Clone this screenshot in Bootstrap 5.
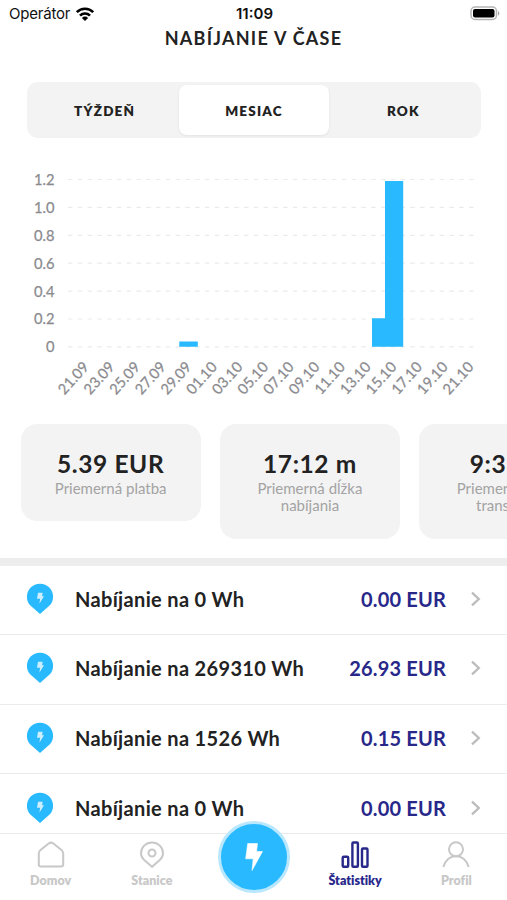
<!DOCTYPE html>
<html lang="sk">
<head>
<meta charset="utf-8">
<meta name="viewport" content="width=device-width, initial-scale=1">
<title>Nabíjanie v čase</title>
<link href="https://cdn.jsdelivr.net/npm/bootstrap@5.3.0/dist/css/bootstrap.min.css" rel="stylesheet">
<style>
  body { font-family: Lato, "Open Sans", sans-serif; color: #222; background: #fff; font-variant-ligatures: none; }
  .screen { width: 507px; height: 900px; }
  .statusbar { height: 27px; font: 15px/27px Inter, "Liberation Sans", sans-serif; color: #111; padding: 0 7px 0 9px; }
  .statusbar > div { flex: 1 1 0; }
  .statusbar .carrier { letter-spacing: -.2px; }
  .clock { font-weight: 600; }
  .page-title { font-size: 18px; line-height: 22px; letter-spacing: 1.25px; font-weight: 700; margin: 0 0 33px; }
  .segments { margin: 0 26px 0 27px; height: 56px; padding: 3px; background: #f3f3f3; border-radius: 11px; }
  .segments .btn { border: 0; font-size: 13.5px; font-weight: 800; letter-spacing: 1.2px; color: #222; border-radius: 8px; padding: 2px 0 0; }
  .segments .btn.active { background: #fff; color: #222; box-shadow: 0 1px 3px rgba(0,0,0,.07); }
  .chart { height: 272px; margin-top: 14px; }
  .chart text { font-family: Lato, sans-serif; font-size: 14.7px; fill: #8b8b8f; stroke: #8b8b8f; stroke-width: .25px; }
  .stats { padding-left: 20.5px; gap: 19px; height: 134px; }
  .stat-box { flex: 0 0 180.3px; background: #f3f3f3; border-radius: 16px; padding: 23px 20px 24px; }
  .stat-value { font-size: 24.5px; line-height: 33px; font-weight: 700; letter-spacing: .6px; }
  .stat-label { font-size: 15px; line-height: 17.3px; color: #a3a3a3; }
  .band { height: 7.500px; background: #ededed; }
  .charges .list-group-item { height: 69.5px; padding: 0 25px 2px 26px; border-color: #ececec; border-width: 0 0 1.5px; color: #222; font-size: 20px; font-weight: 700; letter-spacing: .34px; }
  .pin { margin-right: 21px; }
  .amount { color: #28288a; margin-right: 24px; letter-spacing: .17px; }
  .tabs { height: 67px; border-top: 1px solid #ebebeb; background: #fff; z-index: 2; }
  .tabs a { flex: 1 1 0; font-size: 12.5px; line-height: 15px; font-weight: 800; color: #c8c8c8; padding-top: 6px; }
  .tabs a.current { color: #28288a; }
  .tabs svg { display: block; margin: 0 auto 3px; }
  .charge-btn { width: 72px; height: 72px; margin: -13px 14.500px 0 15.500px; border: 3px solid #b9e7fd; border-radius: 50%; background: #28b9ff; }
  .tabs .charge-btn svg { margin: 0; }
</style>
<script src="https://cdn.jsdelivr.net/npm/bootstrap@5.3.0/dist/js/bootstrap.bundle.min.js"></script>
</head>
<body>
<svg width="0" height="0" class="position-absolute" aria-hidden="true">
  <symbol id="pin" viewBox="0 0 28 32"><path d="M14 .8C6.600 .8.900 6.700.900 13.800c0 3.600 1.200 6.400 3.500 8.800l9.600 8.500 9.600-8.500c2.300-2.400 3.500-5.200 3.500-8.800C27.100 6.700 21.400.8 14 .8z" fill="#28b9ff"/><path d="M12 9.800h4.600l-.5 3.500h1.900l-4.600 7.400.7-4.900h-3.100z" fill="#cdeeff"/></symbol>
  <symbol id="next" viewBox="0 0 12 18"><path d="M2 2.700 8.800 9 2 15.300" fill="none" stroke="#bcbcbc" stroke-width="2.300"/></symbol>
</svg>
<main class="screen d-flex flex-column overflow-hidden">
  <header class="statusbar d-flex flex-shrink-0">
    <div class="carrier d-flex align-items-center"><span>Operátor</span>
      <svg class="ms-1" width="22" height="16" viewBox="0 0 22 16"><g fill="none" stroke="#000" stroke-width="2.600"><path d="M2.800 6.200a11.500 11.500 0 0 1 16.400 0"/><path d="M6 9.600a7 7 0 0 1 10 0"/></g><path d="M11 15 7.900 11.900a4.400 4.400 0 0 1 6.200 0z"/></svg>
    </div>
    <div class="clock text-center">11:09</div>
    <div class="d-flex align-items-center justify-content-end">
      <svg width="31" height="16" viewBox="0 0 31 16"><rect x="2" y="1" width="25.500" height="12.500" rx="4" fill="#fff" stroke="#b5b5b5" stroke-width="1.500"/><rect x="4" y="3" width="21.500" height="8.500" rx="2"/><path d="M29 5.200c1.800.5 1.800 3.700 0 4.200z" fill="#aaa"/></svg>
    </div>
  </header>
  <h1 class="page-title text-center flex-shrink-0">NABÍJANIE V ČASE</h1>
  <div class="segments d-flex flex-shrink-0">
    <button class="btn flex-fill w-100">TÝŽDEŇ</button>
    <button class="btn flex-fill w-100 active">MESIAC</button>
    <button class="btn flex-fill w-100">ROK</button>
  </div>
  <svg class="chart flex-shrink-0" width="507" viewBox="0 152 507 272">
    <g stroke="#ebebeb" stroke-width="1.200" stroke-dasharray="4.500 5.280">
      <path d="M68 179.500H477M68 207.400H477M68 235.300H477M68 263.200H477M68 291.100H477M68 319H477M68 346.800H477"/>
    </g>
    <g fill="#28b9ff"><path d="M179.300 341.500h18.500v5.300h-18.500zM372 318.200h18.300v28.600H372zM385 181h18.200v165.800H385z"/></g>
    <g text-anchor="end">
      <text x="54.500" y="185">1.2</text><text x="54.500" y="213">1.0</text><text x="54.500" y="240.800">0.8</text><text x="54.500" y="268.600">0.6</text><text x="54.500" y="296.500">0.4</text><text x="54.500" y="324.400">0.2</text><text x="54.500" y="352.200">0</text>
    </g>
    <g text-anchor="end">
      <text transform="translate(89.700 367.500) rotate(-48)">21.09</text>
      <text transform="translate(115.400 367.500) rotate(-48)">23.09</text>
      <text transform="translate(141 367.500) rotate(-48)">25.09</text>
      <text transform="translate(166.600 367.500) rotate(-48)">27.09</text>
      <text transform="translate(192.300 367.500) rotate(-48)">29.09</text>
      <text transform="translate(217.900 367.500) rotate(-48)">01.10</text>
      <text transform="translate(243.500 367.500) rotate(-48)">03.10</text>
      <text transform="translate(269.100 367.500) rotate(-48)">05.10</text>
      <text transform="translate(294.800 367.500) rotate(-48)">07.10</text>
      <text transform="translate(320.400 367.500) rotate(-48)">09.10</text>
      <text transform="translate(346 367.500) rotate(-48)">11.10</text>
      <text transform="translate(371.700 367.500) rotate(-48)">13.10</text>
      <text transform="translate(397.400 367.500) rotate(-48)">15.10</text>
      <text transform="translate(423 367.500) rotate(-48)">17.10</text>
      <text transform="translate(448.700 367.500) rotate(-48)">19.10</text>
      <text transform="translate(474.400 367.500) rotate(-48)">21.10</text>
    </g>
  </svg>
  <section class="stats d-flex align-items-start flex-shrink-0 text-center">
    <div class="stat-box"><div class="stat-value">5.39 EUR</div><div class="stat-label">Priemerná platba</div></div>
    <div class="stat-box"><div class="stat-value">17:12 m</div><div class="stat-label">Priemerná dĺžka<br>nabíjania</div></div>
    <div class="stat-box"><div class="stat-value">9:33 m</div><div class="stat-label">Priemerná dĺžka<br>transakcie</div></div>
  </section>
  <div class="band flex-shrink-0"></div>
  <div class="charges list-group list-group-flush flex-grow-1 overflow-hidden">
    <div class="list-group-item d-flex align-items-center flex-shrink-0"><svg class="pin" width="28" height="32"><use href="#pin"/></svg><span class="flex-grow-1">Nabíjanie na 0 Wh</span><span class="amount">0.00 EUR</span><svg width="12" height="18"><use href="#next"/></svg></div>
    <div class="list-group-item d-flex align-items-center flex-shrink-0"><svg class="pin" width="28" height="32"><use href="#pin"/></svg><span class="flex-grow-1">Nabíjanie na 269310 Wh</span><span class="amount">26.93 EUR</span><svg width="12" height="18"><use href="#next"/></svg></div>
    <div class="list-group-item d-flex align-items-center flex-shrink-0"><svg class="pin" width="28" height="32"><use href="#pin"/></svg><span class="flex-grow-1">Nabíjanie na 1526 Wh</span><span class="amount">0.15 EUR</span><svg width="12" height="18"><use href="#next"/></svg></div>
    <div class="list-group-item d-flex align-items-center flex-shrink-0"><svg class="pin" width="28" height="32"><use href="#pin"/></svg><span class="flex-grow-1">Nabíjanie na 0 Wh</span><span class="amount">0.00 EUR</span><svg width="12" height="18"><use href="#next"/></svg></div>
  </div>
  <nav class="tabs d-flex flex-shrink-0 text-center">
    <a class="text-decoration-none"><svg width="30" height="30" viewBox="0 0 30 30" fill="none" stroke="#c8c8c8" stroke-width="2"><path d="M2.800 13.500Q2.800 11.800 4 10.600L12.600 3.500Q15 1.700 17.400 3.500L26 10.600Q27.200 11.800 27.200 13.500V24.500Q27.200 26.500 25 26.500H5Q2.800 26.500 2.800 24.500Z"/></svg>Domov</a>
    <a class="text-decoration-none"><svg width="30" height="30" viewBox="0 0 30 30" fill="none" stroke="#c8c8c8" stroke-width="2"><path d="M15 26.800 7.200 20C5 18 4 15.700 4 13.200 4 7.200 8.800 2.500 15 2.500s11 4.700 11 10.700c0 2.500-1 4.800-3.200 6.800z"/><circle cx="15" cy="13" r="3.500"/></svg>Stanice</a>
    <div class="charge-btn d-flex align-items-center justify-content-center flex-shrink-0"><svg width="24" height="32" viewBox="0 0 24 32"><path d="M5.700 2.500h9.800l-.9 8h5.900L10 29.500l1.200-11.700H3.700z" fill="#fff" stroke="#fff" stroke-width=".6" stroke-linejoin="round"/></svg></div>
    <a class="text-decoration-none current"><svg width="30" height="30" viewBox="0 0 30 30" fill="none" stroke="#28288a" stroke-width="2.400"><rect x="2.700" y="16.800" width="5.500" height="10" rx="1"/><rect x="12.400" y="2.500" width="5.500" height="24.300" rx="1"/><rect x="22" y="8.500" width="5.500" height="18.300" rx="1"/></svg>Štatistiky</a>
    <a class="text-decoration-none"><svg width="30" height="30" viewBox="0 0 30 30" fill="none" stroke="#c8c8c8" stroke-width="2"><circle cx="15" cy="9.300" r="7"/><path d="M2.400 27C4.500 20 9.500 16.300 15 16.300S25.500 20 27.600 27"/></svg>Profil</a>
  </nav>
</main>
</body>
</html>
